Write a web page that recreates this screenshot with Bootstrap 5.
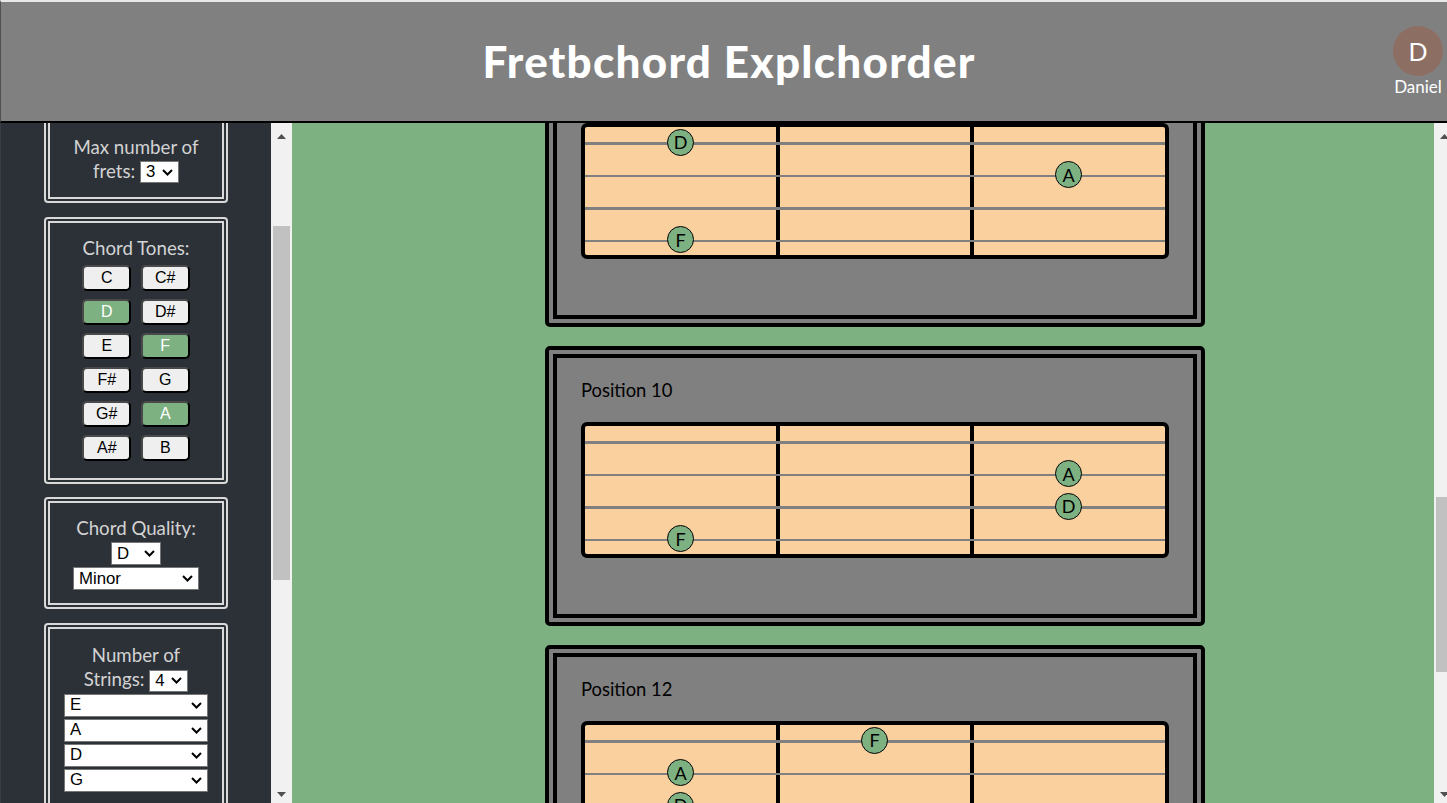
<!DOCTYPE html>
<html lang="en">
<head>
  <meta charset="UTF-8">
  <meta name="viewport" content="width=device-width, initial-scale=1.0">
  <title>Fretbchord Explchorder</title>
  <link rel="stylesheet" href="https://cdn.jsdelivr.net/npm/bootstrap@5.3.0/dist/css/bootstrap.min.css">
  <style>
    html, body {
      height: 100%;
      overflow: hidden;
    }

    body {
      background-color: #3a3e44;
      font-family: Lato, "Liberation Sans", sans-serif;
      padding-left: 1px;
    }

    .app-header {
      height: 123px;
      margin-left: -1px;
      background-color: #808080;
      border-top: 2px solid #e8e8e8;
      border-left: 1px solid #505050;
      border-bottom: 2px solid #000;
    }

    .app-title {
      margin: 0 0 0 10px;
      color: #fff;
      font-size: 44px;
      font-weight: 900;
      letter-spacing: 1.25px;
      font-family: Lato, "Liberation Sans", sans-serif;
    }

    .user-box {
      width: 54px;
      right: 2px;
      top: 24px;
      color: #fff;
      font-size: 17px;
      line-height: 20px;
    }

    .user-avatar {
      width: 50px;
      height: 50px;
      margin-bottom: 1px;
      background-color: #8d6e63;
      font-size: 25px;
    }

    .app-body {
      height: 680px;
    }

    .side-pane, .main-pane {
      height: 680px;
      overflow: hidden;
    }

    .side-pane {
      flex: 0 0 270px;
      background-color: #2c3138;
      padding: 0 43px;
      color: #d3d3d3;
      font-size: 18.7px;
      line-height: 24px;
    }

    .side-inner {
      min-height: 1235px;
      padding-top: 149px;
    }

    .main-pane {
      flex: 0 0 1142px;
      background-color: #7eb181;
      padding: 108px 0 4px 24px;
    }

    /* window scrollbars, headless shots hide the real ones */
    .fake-bar {
      flex: 0 0 21px;
      display: flex;
      flex-direction: column;
      background-color: #f1f1f1;
    }

    .bar-btn-up {
      height: 20px;
      display: flex;
      align-items: flex-end;
      justify-content: center;
    }

    .bar-btn-down {
      height: 17px;
      display: flex;
      align-items: center;
      justify-content: center;
    }

    .bar-track {
      flex: 1 1 auto;
      padding: 0 2px;
    }

    .bar-thumb {
      background-color: #c1c1c1;
    }

    .ctl-panel {
      width: 184px;
      margin-bottom: 14px;
      padding: 14px 6px;
      border: 6px double #d9d9d9;
      border-radius: 4px;
      text-align: center;
    }

    .ctl-select {
      display: block;
      appearance: none;
      margin: 0 auto 2.5px;
      height: 22.5px;
      padding: 0 0 0 5px;
      background-color: #fff;
      background-image: url("data:image/svg+xml,%3Csvg xmlns='http://www.w3.org/2000/svg' width='11' height='7'%3E%3Cpath d='M1 1l4.500 4.500L10 1' fill='none' stroke='%23000' stroke-width='2'/%3E%3C/svg%3E");
      background-repeat: no-repeat;
      background-position: right 5px center;
      font-family: "Liberation Sans", Arial, sans-serif;
      font-size: 16.800px;
      line-height: 20px;
      color: #000;
      text-align: left;
      border: 1px solid #767676;
      border-radius: 0;
    }

    .ctl-select.inline {
      display: inline-block;
      margin: 0;
      vertical-align: 1px;
    }

    .w-frets, .w-count { width: 39px; }
    .w-root { width: 50px; margin-top: 2px; }
    .w-quality { width: 126px; }
    .w-string { width: 144px; }

    .frets-panel {
      padding-top: 16px;
    }

    .tone-panel {
      padding-top: 13px;
      padding-bottom: 17px;
      margin-bottom: 13px;
    }

    .quality-panel {
      padding-top: 13px;
      padding-bottom: 13px;
    }

    .strings-panel .ctl-select.inline {
      margin-bottom: 2px;
      vertical-align: 0;
    }

    .tone-grid {
      display: grid;
      grid-template-columns: 49px 49px;
      justify-content: center;
      gap: 8px 9.5px;
      margin-top: 5px;
    }

    .tone-btn {
      height: 26px;
      padding: 0;
      background-color: #efefef;
      color: #000;
      font-family: "Liberation Sans", Arial, sans-serif;
      font-size: 16px;
      line-height: 18px;
      border: 2px outset #4a4a4a;
      border-radius: 5px;
    }

    .tone-btn.on {
      background-color: #7eb181;
      color: #fff;
    }

    .pos-card {
      width: 660px;
      height: 280px;
      margin: 0 auto 19px;
      padding: 20px 24px 0;
      background-color: #808080;
      border: 12px double #000;
      border-radius: 5px;
      color: #000;
    }

    .pos-label {
      height: 44px;
      margin: 0;
      font-size: 18.400px;
      line-height: 24px;
    }

    .fret-board {
      position: relative;
      display: grid;
      grid-template-columns: 195px 194px 1fr;
      height: 136px;
      background-color: #fbd09f;
      border: 4px solid #000;
      border-radius: 6px;
    }

    .fret-cell:not(:nth-child(3)) {
      border-right: 4px solid #000;
    }

    .string-layer {
      position: absolute;
      inset: 15px 0 auto 0;
      display: flex;
      flex-direction: column;
      gap: 30px;
    }

    .guitar-string {
      height: 2.5px;
      background-color: #808080;
    }

    .note-dot {
      position: absolute;
      width: 27px;
      height: 27px;
      margin: -13.5px 0 0 -13.5px;
      background-color: #7eb181;
      border: 1px solid #000;
      font-size: 18px;
      line-height: 1;
    }
  </style>
</head>
<body>
  <header class="app-header position-relative d-flex align-items-center justify-content-center">
    <h1 class="app-title">Fretbchord Explchorder</h1>
    <div class="user-box position-absolute d-flex flex-column align-items-center">
      <div class="user-avatar rounded-circle d-flex align-items-center justify-content-center">D</div>
      <div>Daniel</div>
    </div>
  </header>

  <div class="app-body d-flex">
    <!-- Controls -->
    <aside class="side-pane" id="sidePane">
      <div class="side-inner">
        <div class="ctl-panel frets-panel">
          Max number of frets:
          <select class="ctl-select inline w-frets"><option>3</option><option>4</option><option>5</option></select>
        </div>

        <div class="ctl-panel tone-panel">
          Chord Tones:
          <div class="tone-grid" id="toneGrid"></div>
        </div>

        <div class="ctl-panel quality-panel">
          Chord Quality:
          <select class="ctl-select w-root"><option>D</option></select>
          <select class="ctl-select w-quality mb-0"><option>Minor</option><option>Major</option></select>
        </div>

        <div class="ctl-panel strings-panel">
          Number of<br>Strings:
          <select class="ctl-select inline w-count"><option>4</option><option>5</option><option>6</option></select>
          <select class="ctl-select w-string"><option>E</option></select>
          <select class="ctl-select w-string"><option>A</option></select>
          <select class="ctl-select w-string"><option>D</option></select>
          <select class="ctl-select w-string mb-0"><option>G</option></select>
        </div>
      </div>
    </aside>
    <div class="fake-bar" id="sideBar"></div>

    <!-- Chord positions -->
    <main class="main-pane" id="mainPane"></main>
    <div class="fake-bar" id="mainBar"></div>
  </div>

  <script>
    const TONES = ['C', 'C#', 'D', 'D#', 'E', 'F', 'F#', 'G', 'G#', 'A', 'A#', 'B'];
    const ACTIVE = ['D', 'F', 'A'];

    // [string, fret column, note]
    const POSITIONS = [
      { pos: 1, notes: [[0, 0, 'F'], [1, 0, 'A'], [2, 0, 'D']] },
      { pos: 3, notes: [[0, 2, 'A'], [1, 2, 'D'], [2, 0, 'F']] },
      { pos: 5, notes: [[0, 0, 'A'], [1, 0, 'D'], [2, 1, 'F']] },
      { pos: 8, notes: [[0, 1, 'A'], [2, 2, 'F'], [3, 0, 'A']] },
      { pos: 10, notes: [[0, 0, 'D'], [1, 2, 'A'], [3, 0, 'F']] },
      { pos: 10, notes: [[1, 2, 'A'], [2, 2, 'D'], [3, 0, 'F']] },
      { pos: 12, notes: [[0, 1, 'F'], [1, 0, 'A'], [2, 0, 'D']] },
      { pos: 13, notes: [[0, 2, 'A'], [1, 1, 'D'], [2, 0, 'F']] }
    ];

    document.getElementById('toneGrid').innerHTML = TONES.map(t =>
      `<button class="tone-btn ${ACTIVE.includes(t) ? 'on' : ''}">${t}</button>`
    ).join('');

    function boardHtml(notes) {
      const strings = '<div class="guitar-string"></div>'.repeat(4);
      const dots = notes.map(([s, col, note]) => {
        const left = 95.5 + col * 194;
        const top = 15 + s * 32.5;
        return `<div class="note-dot rounded-circle d-flex align-items-center justify-content-center" style="left:${left}px;top:${top}px">${note}</div>`;
      }).join('');
      return `<div class="fret-board">
        <div class="fret-cell"></div><div class="fret-cell"></div><div class="fret-cell"></div>
        <div class="string-layer">${strings}</div>${dots}
      </div>`;
    }

    document.getElementById('mainPane').innerHTML = POSITIONS.map(p =>
      `<section class="pos-card"><p class="pos-label">Position ${p.pos}</p>${boardHtml(p.notes)}</section>`
    ).join('');

    function drawBar(bar, pane, scrollTop) {
      pane.scrollTop = scrollTop;
      const track = 643;
      const thumb = track * pane.clientHeight / pane.scrollHeight;
      const top = (track - thumb) * pane.scrollTop / (pane.scrollHeight - pane.clientHeight);
      bar.innerHTML = `
        <div class="bar-btn-up"><svg width="9" height="5" class="mb-1"><path d="M0 5h9L4.500 0z" fill="#505050"/></svg></div>
        <div class="bar-track"><div class="bar-thumb" style="height:${thumb}px;margin-top:${top}px"></div></div>
        <div class="bar-btn-down"><svg width="9" height="5"><path d="M0 0h9L4.500 5z" fill="#505050"/></svg></div>`;
    }

    drawBar(document.getElementById('sideBar'), document.getElementById('sidePane'), 159);
    drawBar(document.getElementById('mainBar'), document.getElementById('mainPane'), 1380);
  </script>
  <script src="https://cdn.jsdelivr.net/npm/bootstrap@5.3.0/dist/js/bootstrap.bundle.min.js"></script>
</body>
</html>
